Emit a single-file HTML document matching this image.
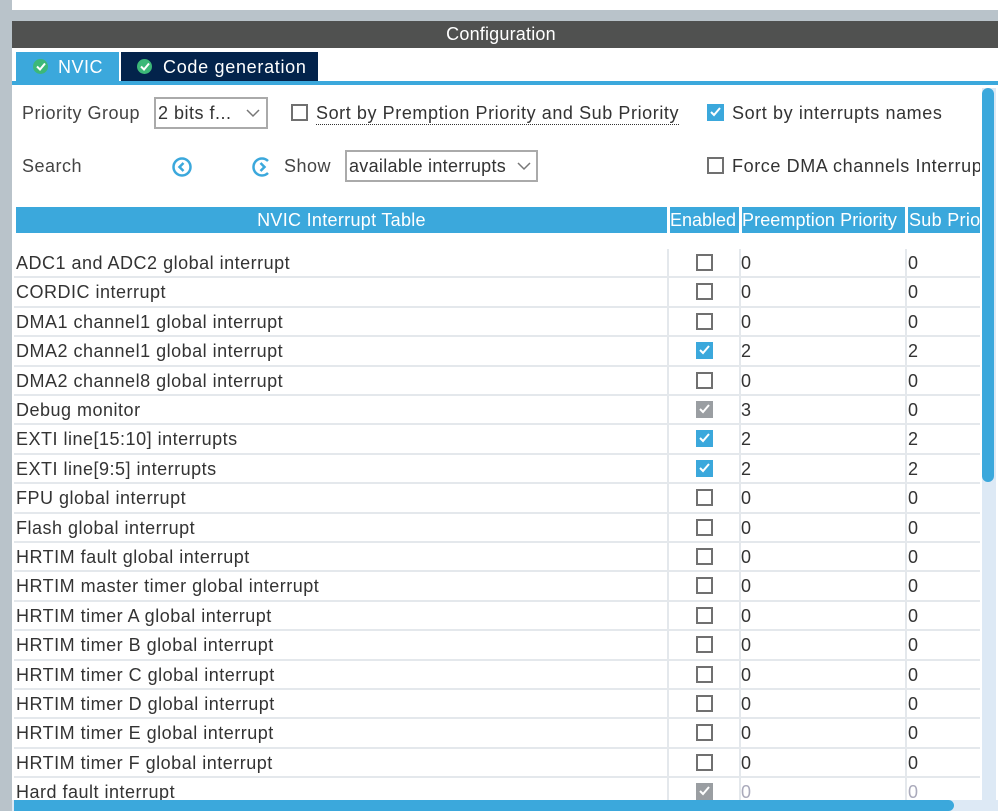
<!DOCTYPE html>
<html><head><meta charset="utf-8"><style>
*{margin:0;padding:0;box-sizing:border-box}
body{width:998px;height:811px;overflow:hidden;background:#fff;font-family:"Liberation Sans",sans-serif;font-size:18px;color:#333;position:relative;letter-spacing:.5px}
.a{position:absolute}
.cb{position:absolute;width:17px;height:17px;border:2px solid #707070;background:#fff}
.cb.on{border:none;background:#3ba8dc}
.cb.dis{border:none;background:#9a9ea2}
.cb.on svg,.cb.dis svg{position:absolute;left:2px;top:2px}
.row{position:absolute;left:14px;width:966px;height:29.4px;border-bottom:2px solid #e4e8ec}
.row .n{position:absolute;left:2px;top:4px;font-size:18px;color:#333}
.row .p{position:absolute;left:727px;top:4px}
.row .s{position:absolute;left:894px;top:4px}
.row .cb{left:682px;top:5px}
.vl{position:absolute;top:249px;height:562px;width:2px;background:#e4e8ec}
.hd{position:absolute;top:207px;height:26px;background:#3ba8dc;color:#fff;font-size:18px;line-height:26px;white-space:nowrap;overflow:hidden;letter-spacing:.3px}
</style></head><body>
<div class="a" style="left:0;top:0;width:12px;height:811px;background:#b9c3ca"></div>
<div class="a" style="left:12px;top:10px;width:986px;height:11px;background:#b9c3ca"></div>
<div class="a" style="left:12px;top:21px;width:986px;height:27px;background:#505150;color:#fff;font-size:18px;line-height:27px;text-align:center;letter-spacing:.2px;padding-right:8px">Configuration</div>
<div class="a" style="left:16px;top:52px;width:103px;height:30px;background:#3ba8dc;color:#fff;font-size:18px;line-height:30px"><span style="position:absolute;left:17px;top:7px;width:15px;height:15px;border-radius:50%;background:#3cb878"></span><svg class="a" style="left:20px;top:10px" width="10" height="9"><path d="M1 4.5l3 3 5-6" stroke="#fff" stroke-width="2" fill="none"/></svg><span style="position:absolute;left:42px">NVIC</span></div>
<div class="a" style="left:121px;top:52px;width:197px;height:30px;background:#03234b;color:#fff;font-size:18px;line-height:30px;letter-spacing:.7px"><span style="position:absolute;left:16px;top:7px;width:15px;height:15px;border-radius:50%;background:#3cb878"></span><svg class="a" style="left:19px;top:10px" width="10" height="9"><path d="M1 4.5l3 3 5-6" stroke="#fff" stroke-width="2" fill="none"/></svg><span style="position:absolute;left:42px">Code generation</span></div>
<div class="a" style="left:12px;top:81px;width:986px;height:4px;background:#3ba8dc"></div>

<div class="a" style="left:22px;top:103px;color:#444">Priority Group</div>
<div class="a" style="left:154px;top:97px;width:114px;height:32px;border:2px solid #aaa;padding-left:2px;line-height:28px;color:#333">2 bits f...<svg class="a" style="left:90px;top:10px" width="14" height="9"><path d="M1 1l6 6 6-6" stroke="#777" stroke-width="1.5" fill="none"/></svg></div>
<div class="cb" style="left:291px;top:104px"></div>
<div class="a" style="left:316px;top:102px;color:#333;border-bottom:1px dotted #333;line-height:22px;letter-spacing:.58px">Sort by Premption Priority and Sub Priority</div>
<div class="cb on" style="left:707px;top:104px"><svg width="13" height="12"><path d="M2 6l3 3 6-7" stroke="#fff" stroke-width="2" fill="none"/></svg></div>
<div class="a" style="left:732px;top:103px;color:#333;letter-spacing:.6px">Sort by interrupts names</div>

<div class="a" style="left:22px;top:156px;color:#444">Search</div>
<svg class="a" style="left:171px;top:156px" width="22" height="22"><circle cx="11" cy="11" r="8.5" stroke="#3ba8dc" stroke-width="2.5" fill="none"/><path d="M12.5 7l-4 4 4 4" stroke="#3ba8dc" stroke-width="2.5" fill="none"/></svg>
<svg class="a" style="left:251px;top:156px" width="22" height="22"><path d="M17 5A8.5 8.5 0 1 0 17 17" stroke="#3ba8dc" stroke-width="2.5" fill="none"/><path d="M9.5 7l4 4-4 4" stroke="#3ba8dc" stroke-width="2.5" fill="none"/></svg>
<div class="a" style="left:284px;top:156px;color:#444">Show</div>
<div class="a" style="left:345px;top:150px;width:193px;height:32px;border:2px solid #aaa;padding-left:2px;line-height:28px;color:#333;letter-spacing:.3px">available interrupts<svg class="a" style="left:170px;top:10px" width="14" height="9"><path d="M1 1l6 6 6-6" stroke="#777" stroke-width="1.5" fill="none"/></svg></div>
<div class="cb" style="left:707px;top:157px"></div>
<div class="a" style="left:732px;top:156px;width:248px;overflow:hidden;color:#333;white-space:nowrap;letter-spacing:.6px">Force DMA channels Interrupts</div>

<div class="hd" style="left:16px;width:651px;text-align:center">NVIC Interrupt Table</div>
<div class="hd" style="left:670px;width:69px;padding-left:0;letter-spacing:0">Enabled</div>
<div class="hd" style="left:742px;width:163px;padding-left:0;letter-spacing:.1px">Preemption Priority</div>
<div class="hd" style="left:908px;width:72px;padding-left:1px">Sub Priority</div>

<div id="rows"></div>
<div class="vl" style="left:667px"></div>
<div class="vl" style="left:739px"></div>
<div class="vl" style="left:905px"></div>

<div class="a" style="left:980px;top:88px;width:18px;height:723px;background:#fff"></div>
<div class="a" style="left:982px;top:88px;width:14px;height:723px;background:#dde9f5"></div>
<div class="a" style="left:982px;top:88px;width:12px;height:394px;background:#3ba8dc;border-radius:6px"></div>
<div class="a" style="left:0;top:800px;width:998px;height:11px;background:#dde9f5"></div>
<div class="a" style="left:0;top:800px;width:12px;height:11px;background:#b9c3ca"></div>
<div class="a" style="left:14px;top:800px;width:940px;height:11px;background:#3ba8dc;border-radius:0 6px 6px 0"></div>
<script>
var d=[["ADC1 and ADC2 global interrupt",0,0,0],["CORDIC interrupt",0,0,0],["DMA1 channel1 global interrupt",0,0,0],["DMA2 channel1 global interrupt",1,2,2],["DMA2 channel8 global interrupt",0,0,0],["Debug monitor",2,3,0],["EXTI line[15:10] interrupts",1,2,2],["EXTI line[9:5] interrupts",1,2,2],["FPU global interrupt",0,0,0],["Flash global interrupt",0,0,0],["HRTIM fault global interrupt",0,0,0],["HRTIM master timer global interrupt",0,0,0],["HRTIM timer A global interrupt",0,0,0],["HRTIM timer B global interrupt",0,0,0],["HRTIM timer C global interrupt",0,0,0],["HRTIM timer D global interrupt",0,0,0],["HRTIM timer E global interrupt",0,0,0],["HRTIM timer F global interrupt",0,0,0],["Hard fault interrupt",2,0,0,1]];
var h="",ck='<svg width="13" height="12"><path d="M2 6l3 3 6-7" stroke="#fff" stroke-width="2" fill="none"/></svg>';
d.forEach(function(r,i){var t=249+i*29.4;var c=r[1]==0?'<div class="cb"></div>':(r[1]==1?'<div class="cb on">'+ck+'</div>':'<div class="cb dis">'+ck+'</div>');var col=r[4]?'color:#aab':'';
h+='<div class="row" style="top:'+t+'px"><span class="n">'+r[0]+'</span>'+c+'<span class="p" style="'+col+'">'+r[2]+'</span><span class="s" style="'+col+'">'+r[3]+'</span></div>';});
document.getElementById("rows").innerHTML=h;
</script>
</body></html>
